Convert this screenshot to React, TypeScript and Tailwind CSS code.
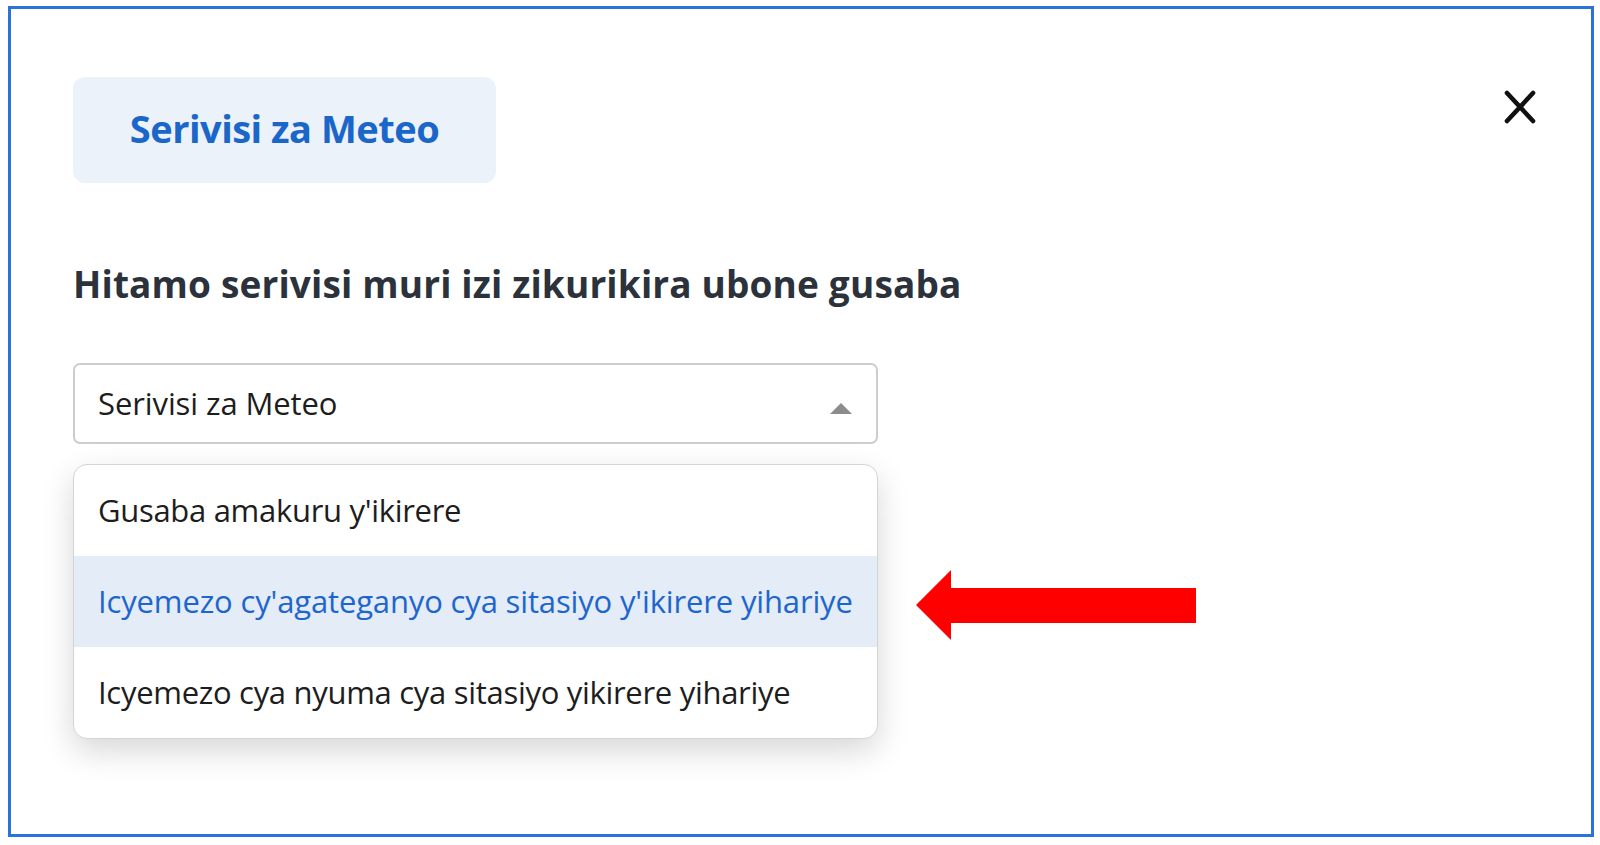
import { useState } from "react";

const options = [
  "Gusaba amakuru y'ikirere",
  "Icyemezo cy'agateganyo cya sitasiyo y'ikirere yihariye",
  "Icyemezo cya nyuma cya sitasiyo yikirere yihariye",
];

function CloseIcon() {
  return (
    <svg width="32" height="34" viewBox="0 0 32 34" aria-hidden>
      <path
        d="M3 3 L29 31 M29 3 L3 31"
        stroke="#111"
        strokeWidth="4.6"
        strokeLinecap="round"
        fill="none"
      />
    </svg>
  );
}

function PointerArrow() {
  return (
    <svg width="282" height="72" viewBox="0 0 282 72" aria-hidden>
      <polygon points="0,35 35,0 35,18 280,18 280,53 35,53 35,70" fill="#ff0000" />
    </svg>
  );
}

export default function App() {
  const [selected] = useState(1);

  return (
    <div
      className="h-[845px] w-[1600px] bg-white pl-[8px] pt-[6px]"
      style={{ fontFamily: '"Open Sans", "Noto Sans", sans-serif' }}
    >
      <div className="flex h-[831px] w-[1586px] flex-col border-[3px] border-[#2b72dd] pl-[62px] pr-[55px] pt-[68px]">
        <div className="flex items-start justify-between">
          <div className="flex h-[106px] w-[423px] items-center justify-center rounded-[12px] bg-[#ecf2fa]">
            <span className="-mt-[3px] text-[38px] font-bold tracking-[-0.5px] text-[#1b66c9]">
              Serivisi za Meteo
            </span>
          </div>
          <div className="mt-[13px]">
            <CloseIcon />
          </div>
        </div>

        <h1 className="mt-[77px] text-[37px] font-bold leading-[48px] tracking-[0.15px] text-[#2b323b]">
          Hitamo serivisi muri izi zikurikira ubone gusaba
        </h1>

        <div className="mt-[55px] flex h-[81px] w-[805px] items-center justify-between rounded-[7px] border-2 border-[#cdcdcd] bg-white pl-[23px] pr-[24px]">
          <span className="text-[31px] tracking-[-0.1px] text-[#1d1d1d]">Serivisi za Meteo</span>
          <span className="mt-[9px] h-0 w-0 border-x-[11px] border-b-[11px] border-x-transparent border-b-[#8c8c8c]" />
        </div>

        <div className="relative mt-[20px] flex items-center">
          <ul className="w-[805px] overflow-hidden rounded-[14px] border border-[#d4d4d4] bg-white shadow-[0_12px_32px_rgba(0,0,0,0.16)]">
            {options.map((opt, i) => (
              <li
                key={opt}
                className={[
                  "flex h-[91px] items-center pl-[24px] text-[31px]",
                  i === selected
                    ? "bg-[#e3ecf7] tracking-[-0.15px] text-[#1e66cc]"
                    : "tracking-[-0.3px] text-[#1d1d1d]",
                ].join(" ")}
              >
                {opt}
              </li>
            ))}
          </ul>
          <div className="ml-[38px] mt-[8px]">
            <PointerArrow />
          </div>
        </div>
      </div>
    </div>
  );
}
